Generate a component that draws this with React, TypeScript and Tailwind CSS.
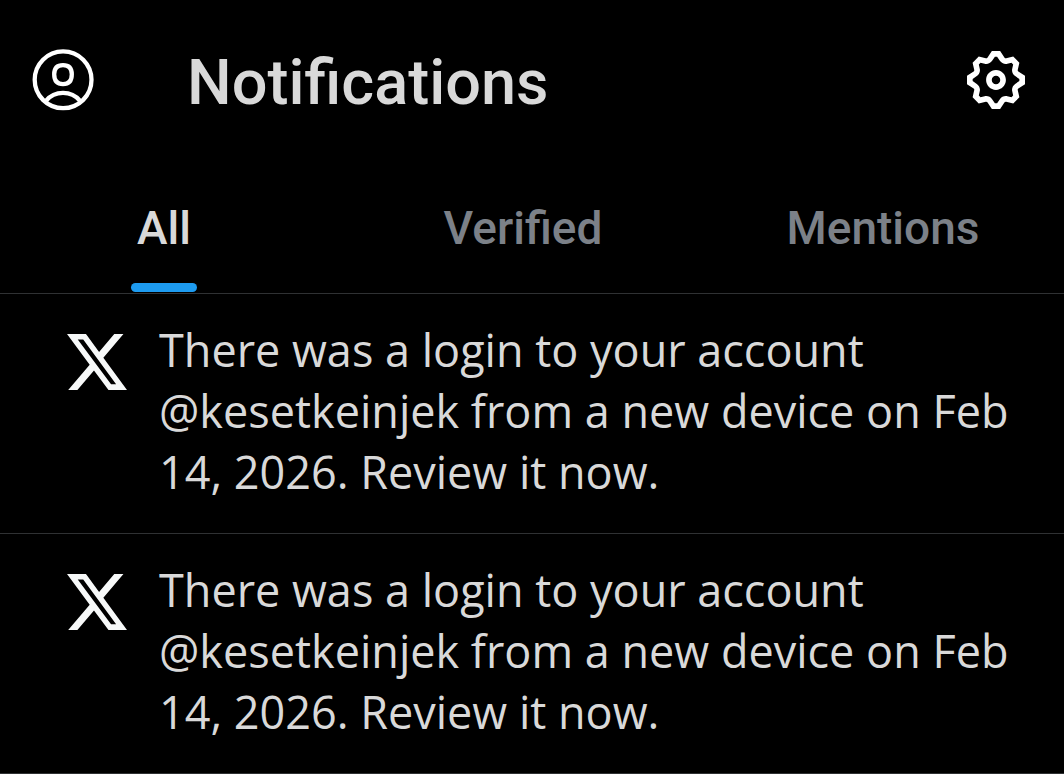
import React from "react";

type Notification = { id: number; text: string };

const tabs = ["All", "Verified", "Mentions"];

const notifications: Notification[] = [
  {
    id: 1,
    text: "There was a login to your account @kesetkeinjek from a new device on Feb 14, 2026. Review it now.",
  },
  {
    id: 2,
    text: "There was a login to your account @kesetkeinjek from a new device on Feb 14, 2026. Review it now.",
  },
];

function ProfileIcon() {
  return (
    <svg viewBox="0 0 62 62" className="size-[62px]" fill="none" stroke="currentColor" strokeWidth="4.3" aria-hidden="true">
      <circle cx="31.1" cy="30.8" r="28.4" />
      <path d="M31 16.1c6.1 0 8.8 3.2 8.8 9.2 0 6.2-2.8 9.8-8.8 9.8s-8.8-3.6-8.8-9.8c0-6 2.7-9.2 8.8-9.2z" />
      <path d="M14.2 51.6C18.4 46.4 24.2 43.8 31 43.8s12.6 2.6 16.8 7.8" />
    </svg>
  );
}

function SettingsIcon() {
  return (
    <svg viewBox="1.75 1.75 20.5 20.5" className="size-[58px]" fill="currentColor" aria-hidden="true">
      <path d="M10.54 1.75h2.92l1.57 2.36c.11.17.32.25.53.21l2.53-.59 2.17 2.17-.58 2.54c-.05.2.04.41.21.53l2.36 1.57v2.92l-2.36 1.57c-.17.12-.26.33-.21.53l.58 2.54-2.17 2.17-2.53-.59c-.21-.04-.42.04-.53.21l-1.57 2.36h-2.92l-1.58-2.36c-.11-.17-.32-.25-.52-.21l-2.54.59-2.17-2.17.58-2.54c.05-.2-.03-.41-.21-.53l-2.35-1.57v-2.92L4.1 8.97c.18-.12.26-.33.21-.53L3.73 5.9 5.9 3.73l2.54.59c.2.04.41-.04.52-.21l1.58-2.36zm1.07 2l-.98 1.47C10.05 6.08 9 6.5 7.99 6.27l-1.46-.34-.6.6.33 1.46c.24 1.01-.18 2.07-1.05 2.64l-1.46.98v.78l1.46.98c.87.57 1.29 1.63 1.05 2.64l-.33 1.46.6.6 1.46-.34c1.01-.23 2.06.19 2.64 1.05l.98 1.47h.78l.97-1.47c.58-.86 1.63-1.28 2.65-1.05l1.45.34.61-.6-.34-1.46c-.23-1.01.18-2.07 1.05-2.64l1.47-.98v-.78l-1.47-.98c-.87-.57-1.28-1.63-1.05-2.64l.34-1.46-.61-.6-1.45.34c-1.02.23-2.07-.19-2.65-1.05l-.97-1.47h-.78zM12 10.5c-.83 0-1.5.67-1.5 1.5s.67 1.5 1.5 1.5c.82 0 1.5-.67 1.5-1.5s-.68-1.5-1.5-1.5zM8.5 12c0-1.93 1.56-3.5 3.5-3.5 1.93 0 3.5 1.57 3.5 3.5s-1.57 3.5-3.5 3.5c-1.94 0-3.5-1.57-3.5-3.5z" />
    </svg>
  );
}

function XLogo() {
  return (
    <svg viewBox="1.254 2.25 21.573 19.5" preserveAspectRatio="none" className="mt-[15px] h-14 w-[60px] shrink-0 text-[#f7f9f9]" fill="currentColor" aria-hidden="true">
      <path d="M18.244 2.25h3.308l-7.227 8.26 8.502 11.24H16.17l-5.214-6.817L4.99 21.75H1.68l7.73-8.835L1.254 2.25H8.08l4.713 6.231zm-1.161 17.52h1.833L7.084 4.126H5.117z" />
    </svg>
  );
}

export default function App() {
  return (
    <div className="min-h-screen bg-black font-['Roboto',sans-serif] text-[#d9d9d9]">
      <header className="flex items-center pt-9 pr-[39px] pl-8">
        <button type="button" aria-label="Profile" className="text-white">
          <ProfileIcon />
        </button>
        <h1 className="ml-[93px] flex-1 pt-[7px] text-[63px] leading-[80px] font-medium">Notifications</h1>
        <button type="button" aria-label="Settings" className="text-white">
          <SettingsIcon />
        </button>
      </header>

      <nav className="mt-[69px] grid grid-cols-[328fr_390fr_330fr] border-b border-[#2f3133] pr-4">
        {tabs.map((tab, i) => (
          <button
            key={tab}
            type="button"
            aria-current={i === 0 ? "page" : undefined}
            className={
              i === 0
                ? "flex flex-col items-center text-[46px] leading-[72px] font-medium text-[#d9d9d9]"
                : "flex flex-col items-center text-[46px] leading-[72px] font-medium text-[#7c8188]"
            }
          >
            {tab}
            <span className={i === 0 ? "mt-[19px] mb-px h-[9px] w-[66px] rounded-full bg-[#1d9bf0]" : "hidden"} />
          </button>
        ))}
      </nav>

      <main>
        {notifications.map((n) => (
          <article key={n.id} className="flex gap-8 border-b border-[#2f3133] pt-[25px] pr-8 pb-[31px] pl-[67px]">
            <XLogo />
            <p className="flex-1 font-['Open_Sans',sans-serif] text-[45px] leading-[61px]">{n.text}</p>
          </article>
        ))}
      </main>
    </div>
  );
}
